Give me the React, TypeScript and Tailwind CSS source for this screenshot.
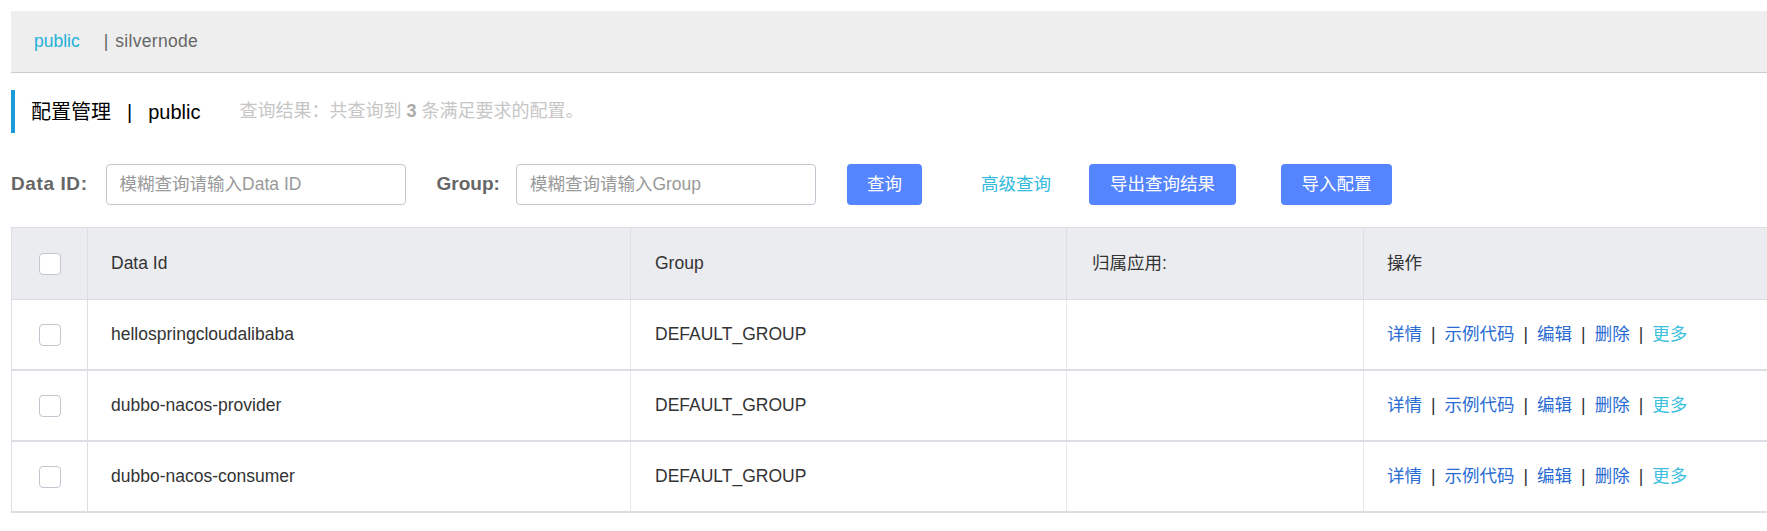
import React from "react";

const rows = [
  "hellospringcloudalibaba",
  "dubbo-nacos-provider",
  "dubbo-nacos-consumer",
];

function Checkbox() {
  return <div className="w-[22px] h-[22px] rounded-[4px] border border-[#c4c6cf] bg-white" />;
}

function Sep() {
  return <span className="mx-[9px] text-[#333]">|</span>;
}

export default function App() {
  return (
    <div className="w-[1767px] h-[531px] overflow-hidden bg-white text-[17.5px] text-[#333] font-['Liberation_Sans','Noto_Sans_CJK_SC',sans-serif]">
      <div className="pl-[11px] pt-[11px]">
        {/* breadcrumb namespace bar */}
        <div className="h-[62px] bg-[#eeeeee] border-b border-[#cccccc] flex items-center pl-[23px]">
          <span className="text-[#1fb0d8]">public</span>
          <span className="ml-[24px] text-[#666]">|</span>
          <span className="ml-[7px] text-[#666] tracking-[0.3px]">silvernode</span>
        </div>

        {/* title */}
        <div className="mt-[17px] h-[43px] flex items-center border-l-4 border-[#1a9ad6] pl-[16px]">
          <span className="text-[20px] text-black">配置管理</span>
          <span className="text-[20px] text-black mx-[16px]">|</span>
          <span className="text-[20px] text-black">public</span>
          <span className="ml-[39px] text-[18px] text-[#c6c6c6]">
            查询结果：共查询到 <b className="text-[#aaaaaa]">3</b> 条满足要求的配置。
          </span>
        </div>

        {/* search row */}
        <div className="mt-[31px] h-[41px] flex items-center">
          <span className="font-bold text-[19px] tracking-[0.6px] text-[#666] mr-[18px]">Data ID:</span>
          <div className="w-[300px] h-[41px] rounded-[4px] border border-[#c4c6cf] flex items-center pl-[13px] text-[#999]">
            模糊查询请输入Data ID
          </div>
          <span className="ml-[31px] font-bold text-[19px] text-[#666] mr-[16px]">Group:</span>
          <div className="w-[300px] h-[41px] rounded-[4px] border border-[#c4c6cf] flex items-center pl-[13px] text-[#999]">
            模糊查询请输入Group
          </div>
          <button className="ml-[31px] w-[75px] h-[41px] rounded-[4px] bg-[#5584ff] text-white flex items-center justify-center">
            查询
          </button>
          <span className="ml-[59px] text-[#33bbdd]">高级查询</span>
          <button className="ml-[38px] w-[147px] h-[41px] rounded-[4px] bg-[#5584ff] text-white flex items-center justify-center">
            导出查询结果
          </button>
          <button className="ml-[45px] w-[111px] h-[41px] rounded-[4px] bg-[#5584ff] text-white flex items-center justify-center">
            导入配置
          </button>
        </div>

        {/* table */}
        <div className="mt-[22px] w-[1800px] border-l border-t border-[#dcdee3]">
          <div className="flex h-[72px] bg-[#ebecf0] border-b border-[#dcdee3]">
            <div className="w-[76px] shrink-0 border-r border-[#dcdee3] flex items-center justify-center">
              <Checkbox />
            </div>
            <div className="w-[543px] shrink-0 border-r border-[#dcdee3] flex items-center pl-[23px]">Data Id</div>
            <div className="w-[436px] shrink-0 border-r border-[#dcdee3] flex items-center pl-[24px]">Group</div>
            <div className="w-[297px] shrink-0 border-r border-[#dcdee3] flex items-center pl-[25px]">归属应用:</div>
            <div className="flex-1 flex items-center pl-[23px]">操作</div>
          </div>
          {rows.map((r) => (
            <div key={r} className="flex h-[71px] bg-white border-b-2 border-[#dcdee3]">
              <div className="w-[76px] shrink-0 border-r border-[#dcdee3] flex items-center justify-center">
                <Checkbox />
              </div>
              <div className="w-[543px] shrink-0 border-r border-[#e6e7eb] flex items-center pl-[23px]">{r}</div>
              <div className="w-[436px] shrink-0 border-r border-[#e6e7eb] flex items-center pl-[24px]">DEFAULT_GROUP</div>
              <div className="w-[297px] shrink-0 border-r border-[#e6e7eb]" />
              <div className="flex-1 flex items-center pl-[23px] text-[#2a6cd3]">
                <span>详情</span>
                <Sep />
                <span>示例代码</span>
                <Sep />
                <span>编辑</span>
                <Sep />
                <span>删除</span>
                <Sep />
                <span className="text-[#3cc0de]">更多</span>
              </div>
            </div>
          ))}
        </div>
      </div>
    </div>
  );
}
